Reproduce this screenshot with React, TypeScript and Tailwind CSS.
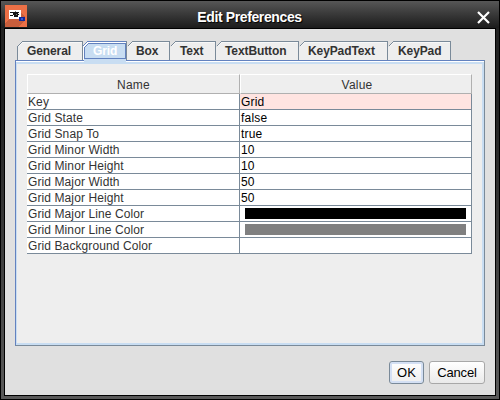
import React from "react";

const tabs = [
  { label: "General", width: "w-[66px]", pad: "pl-[10px]" },
  { label: "Grid", width: "w-[44px]", pad: "pl-[10px]" },
  { label: "Box", width: "w-[43px]", pad: "pl-[9px]" },
  { label: "Text", width: "w-[46px]", pad: "pl-[10px]" },
  { label: "TextButton", width: "w-[83px]", pad: "pl-[9px]" },
  { label: "KeyPadText", width: "w-[89px]", pad: "pl-[9px]" },
  { label: "KeyPad", width: "w-[63px]", pad: "pl-[10px]" },
];
const widths = [66, 44, 43, 46, 83, 89, 63];

const rows = [
  ["Key", "Grid"],
  ["Grid State", "false"],
  ["Grid Snap To", "true"],
  ["Grid Minor Width", "10"],
  ["Grid Minor Height", "10"],
  ["Grid Major Width", "50"],
  ["Grid Major Height", "50"],
  ["Grid Major Line Color", "#000"],
  ["Grid Minor Line Color", "#808080"],
  ["Grid Background Color", ""],
];

function AppIcon() {
  return (
    <svg className="block h-[22px] w-[22px]" viewBox="0 0 22 22" shapeRendering="crispEdges">
      <rect width="22" height="22" fill="#ec7046" />
      <path d="M4 13v1L0 18v4h13l7-7v-3l-4-4z" fill="#c85e3c" />
      <rect x="4" y="5" width="12" height="9" fill="#fff" />
      <path d="M5 7h9v1H5zM5 10h3v1H5zM8 8h1v2H8zM9 8h4v4H9zM13 9h1v1h-1z" fill="#141414" />
      <path d="M11 9h1v1h-1zM10 6h1v1h-1z" fill="#777" />
      <rect x="14" y="12" width="6" height="4" fill="#10289c" />
      <rect x="16" y="13" width="2" height="2" fill="#345bd2" />
    </svg>
  );
}

function Tab({ index }: { index: number }) {
  const { label, width, pad } = tabs[index];
  const w = widths[index];
  const selected = label === "Grid";
  const first = index === 0;
  return (
    <div className={`relative h-[19px] shrink-0 ${width} ${pad}`}>
      <svg className="absolute left-0 top-0 overflow-visible" width={w} height={19} shapeRendering="crispEdges">
        <path d={`M0 6L6 0H${w}V19H0Z`} fill={selected ? "#c8ddf2" : "#eee"} />
        {selected ? (
          <>
            <path d={`M0 5.5L5 0.5H${w}`} fill="none" stroke="#6382bf" />
            <path d={`M0.5 19V6L5 1.5H${w}`} fill="none" stroke="#fff" />
            <path d={`M1.5 17.5V6.5L5.5 2.5H${w - 1.5}V17.5H1`} fill="none" stroke="#6382bf" />
            <path d={`M${w - 0.5} 0V19`} stroke="#7a8a99" />
          </>
        ) : (
          <>
            <path d={`M${first ? "0.5 19V5.5" : "0.5 5.5"}L5.5 0.5H${w - 0.5}V19`} fill="none" stroke="#7a8a99" />
            <path d={`M1.5 5.5L5.5 1.5H${w - 1}`} fill="none" stroke="#f8f8f8" />
          </>
        )}
      </svg>
      <span className={`relative top-px block whitespace-nowrap text-[12px] leading-[19px] font-bold tracking-[-0.1px] ${selected ? "text-white" : "text-[#333]"}`}>
        {label}
      </span>
    </div>
  );
}

export default function App() {
  return (
    <div className="flex h-[400px] w-[500px] flex-col border border-black bg-linear-to-b from-[#222] from-[100px] to-[#5a5a5a] font-['Liberation_Sans',Arial,sans-serif] text-[12px]">
      <header className="flex h-[27px] shrink-0 items-start bg-linear-to-b from-[#575757] to-[#1c1c1c] pl-1 pt-1">
        <AppIcon />
        <h1 className="flex-1 pr-[5px] pt-[3px] text-center text-[14px] leading-[18px] font-bold tracking-[-0.38px] text-white [text-shadow:1px_1px_1px_#000]">Edit Preferences</h1>
        <svg className="mr-[9px] mt-[6px] block" width="13" height="13" viewBox="0 0 13 13">
          <path d="M1 1L12 12M12 1L1 12" stroke="#fff" strokeWidth="2.2" />
        </svg>
      </header>
      <main className="mx-[3px] mb-[3px] flex flex-1 flex-col border border-black bg-[#e0e0e0] px-[10px] pt-[12px]">
        <nav className="flex pl-[2px]">
          {tabs.map((t, i) => <Tab key={t.label} index={i} />)}
        </nav>
        <section className="relative h-[286px] w-[470px] border border-[#6382bf] border-r-[#7a8a99] border-b-[#7a8a99]">
          <div className="h-full border-x-2 border-t-[3px] border-b-2 border-l border-[#c8ddf2] bg-[#eee] pl-[10px] pt-[10px]">
            <div className="w-[445px]">
              <div className="grid h-5 grid-cols-[213px_232px] text-center leading-[20px] tracking-[0.2px] text-[#333]">
                <div className="h-5 border border-t-white border-r-[#b0b0b0] border-b-[#b0b0b0] border-l-white">Name</div>
                <div className="h-5 border border-t-white border-r-[#b0b0b0] border-b-[#b0b0b0] border-l-white pl-[2px]">Value</div>
              </div>
              {rows.map(([name, value], i) => (
                <div key={name} className="grid h-4 grid-cols-[213px_232px] leading-[16px]">
                  <div className="h-4 border-r border-b border-[#7a8a99] bg-white pl-[1px] tracking-[0.1px] text-[#333]">{name}</div>
                  <div className={`h-4 border-r border-b border-[#7a8a99] pl-[1px] tracking-[0.2px] text-black ${i === 0 ? "bg-[#ffe4e1]" : "bg-white"}`}>
                    {value.startsWith("#") ? (
                      <div className="pt-[2px] pl-1">
                        <div className={`h-[11px] w-[221px] ${i === 7 ? "bg-black" : "bg-[#808080]"}`} />
                      </div>
                    ) : value}
                  </div>
                </div>
              ))}
            </div>
          </div>
          <div className="absolute left-0 top-0 h-px w-[468px] bg-white" />
          <div className="absolute left-[68px] top-[-1px] h-[3px] w-[42px] bg-[#c8ddf2]" />
        </section>
        <footer className="mt-[15px] flex justify-end gap-[5px]">
          <button className="h-[23px] w-[35px] rounded-[3px] border border-[#7a8a99] bg-linear-to-b from-white to-[#eee] text-[13px] leading-[22px] shadow-[inset_0_0_0_2px_#d4e0f4]">OK</button>
          <button className="h-[23px] w-[56px] rounded-[3px] border border-[#a8a8a8] bg-linear-to-b from-white to-[#eaeaea] text-[13px] leading-[22px] tracking-[-0.15px]">Cancel</button>
        </footer>
      </main>
    </div>
  );
}
